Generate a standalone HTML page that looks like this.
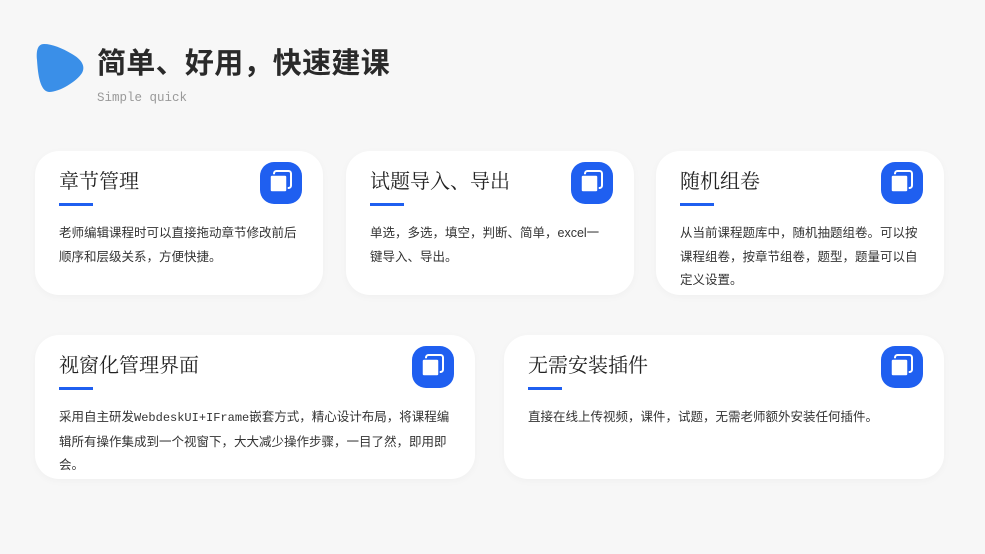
<!DOCTYPE html>
<html><head><meta charset="utf-8"><style>
body{margin:0;width:985px;height:554px;background:#f7f7f7;position:relative;overflow:hidden;font-family:"Liberation Sans","Noto Sans CJK SC",sans-serif}
.logo{position:absolute;left:0;top:0}
h1{position:absolute;left:97px;top:44px;margin:0;font-size:29px;font-weight:bold;color:#2a2a2a;line-height:40px;letter-spacing:0.3px}
.sub{position:absolute;left:97px;top:91px;font-family:"Liberation Mono",monospace;font-size:12.5px;color:#999}
.card{position:absolute;background:#fff;border-radius:24px;height:144px;box-shadow:0 2px 8px rgba(0,0,0,0.03)}
.card .t{position:absolute;left:24px;top:16px;font-family:"Liberation Serif","Noto Serif CJK SC",serif;font-size:20px;color:#222;line-height:30px}
.card .u{position:absolute;left:24px;top:52px;width:34px;height:3px;background:#1f5ff0}
.card .d{position:absolute;left:24px;top:71px;right:24px;font-size:12.5px;color:#333;line-height:23.5px}
.card svg{position:absolute;right:21px;top:11px}
</style></head><body>
<svg class="logo" width="100" height="100" viewBox="0 0 100 100"><path d="M44 44 C38 44 36 50 37 60 C38 75 40 91 49 92 C60 92 77 81 82 73 C86 66 81 59 72 54 C62 48 52 44 44 44 Z" fill="#3a8fe8"/></svg>
<h1>简单、好用，快速建课</h1>
<div class="sub">Simple quick</div>

<div class="card" style="left:35px;top:151px;width:288px"><div class="t">章节管理</div><div class="u"></div><div class="d">老师编辑课程时可以直接拖动章节修改前后顺序和层级关系，方便快捷。</div>
<svg width="42" height="42" viewBox="0 0 42 42"><rect width="42" height="42" rx="14" fill="#1f5ff0"/><rect x="14" y="9" width="17" height="17" rx="2.5" fill="none" stroke="#fff" stroke-width="2"/><rect x="10" y="13" width="17" height="17" rx="2" fill="#fff" stroke="#1f5ff0" stroke-width="1.5"/></svg></div>

<div class="card" style="left:346px;top:151px;width:288px"><div class="t">试题导入、导出</div><div class="u"></div><div class="d">单选，多选，填空，判断、简单，excel一键导入、导出。</div>
<svg width="42" height="42" viewBox="0 0 42 42"><rect width="42" height="42" rx="14" fill="#1f5ff0"/><rect x="14" y="9" width="17" height="17" rx="2.5" fill="none" stroke="#fff" stroke-width="2"/><rect x="10" y="13" width="17" height="17" rx="2" fill="#fff" stroke="#1f5ff0" stroke-width="1.5"/></svg></div>

<div class="card" style="left:656px;top:151px;width:288px"><div class="t">随机组卷</div><div class="u"></div><div class="d">从当前课程题库中，随机抽题组卷。可以按课程组卷，按章节组卷，题型，题量可以自定义设置。</div>
<svg width="42" height="42" viewBox="0 0 42 42"><rect width="42" height="42" rx="14" fill="#1f5ff0"/><rect x="14" y="9" width="17" height="17" rx="2.5" fill="none" stroke="#fff" stroke-width="2"/><rect x="10" y="13" width="17" height="17" rx="2" fill="#fff" stroke="#1f5ff0" stroke-width="1.5"/></svg></div>

<div class="card" style="left:35px;top:335px;width:440px"><div class="t">视窗化管理界面</div><div class="u"></div><div class="d">采用自主研发<span style="font-family:'Liberation Mono',monospace;font-size:12px">WebdeskUI+IFrame</span>嵌套方式，精心设计布局，将课程编辑所有操作集成到一个视窗下，大大减少操作步骤，一目了然，即用即会。</div>
<svg width="42" height="42" viewBox="0 0 42 42"><rect width="42" height="42" rx="14" fill="#1f5ff0"/><rect x="14" y="9" width="17" height="17" rx="2.5" fill="none" stroke="#fff" stroke-width="2"/><rect x="10" y="13" width="17" height="17" rx="2" fill="#fff" stroke="#1f5ff0" stroke-width="1.5"/></svg></div>

<div class="card" style="left:504px;top:335px;width:440px"><div class="t">无需安装插件</div><div class="u"></div><div class="d">直接在线上传视频，课件，试题，无需老师额外安装任何插件。</div>
<svg width="42" height="42" viewBox="0 0 42 42"><rect width="42" height="42" rx="14" fill="#1f5ff0"/><rect x="14" y="9" width="17" height="17" rx="2.5" fill="none" stroke="#fff" stroke-width="2"/><rect x="10" y="13" width="17" height="17" rx="2" fill="#fff" stroke="#1f5ff0" stroke-width="1.5"/></svg></div>
</body></html>
